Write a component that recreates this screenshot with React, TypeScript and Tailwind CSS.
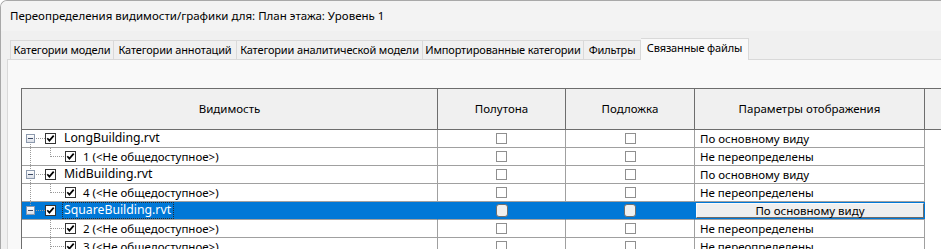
import React from "react";

const tabs = [
  { label: "Категории модели", w: "w-[104px]" },
  { label: "Категории аннотаций", w: "w-[123px]" },
  { label: "Категории аналитической модели", w: "w-[186px]" },
  { label: "Импортированные категории", w: "w-[161px]" },
  { label: "Фильтры", w: "w-[57px]" },
];

type Row =
  | { kind: "parent"; name: string; first: boolean; hasNext: boolean; selected?: boolean; param: string }
  | { kind: "child"; name: string; parentHasNext: boolean; hasNext: boolean; param: string };

const rows: Row[] = [
  { kind: "parent", name: "LongBuilding.rvt", first: true, hasNext: true, param: "По основному виду" },
  { kind: "child", name: "1 (<Не общедоступное>)", parentHasNext: true, hasNext: false, param: "Не переопределены" },
  { kind: "parent", name: "MidBuilding.rvt", first: false, hasNext: true, param: "По основному виду" },
  { kind: "child", name: "4 (<Не общедоступное>)", parentHasNext: true, hasNext: false, param: "Не переопределены" },
  { kind: "parent", name: "SquareBuilding.rvt", first: false, hasNext: false, selected: true, param: "По основному виду" },
  { kind: "child", name: "2 (<Не общедоступное>)", parentHasNext: false, hasNext: true, param: "Не переопределены" },
  { kind: "child", name: "3 (<Не общедоступное>)", parentHasNext: false, hasNext: true, param: "Не переопределены" },
];

const dot = { stroke: "#9a9a9a", strokeDasharray: "1 1", shapeRendering: "crispEdges" as const };

function TreeCheck() {
  return (
    <svg width="11" height="11" viewBox="0 0 11 11" className="shrink-0">
      <rect x="0.5" y="0.5" width="10" height="10" fill="#fff" stroke="#333" shapeRendering="crispEdges" />
      <path d="M2.3 5.2 L4.4 7.6 L8.7 2.6" fill="none" stroke="#000" strokeWidth="1.7" />
    </svg>
  );
}

function ParentGutter({ first, hasNext }: { first: boolean; hasNext: boolean }) {
  return (
    <svg width="23" height="17" viewBox="0 0 23 17" className="shrink-0">
      {!first && <line x1="8.5" y1="0" x2="8.5" y2="4" {...dot} />}
      {hasNext && <line x1="8.5" y1="14" x2="8.5" y2="17" {...dot} />}
      <line x1="14" y1="8.5" x2="23" y2="8.5" {...dot} />
      <defs>
        <linearGradient id="exp" x1="0" y1="0" x2="0" y2="1">
          <stop offset="0" stopColor="#ffffff" />
          <stop offset="1" stopColor="#d8dde6" />
        </linearGradient>
      </defs>
      <rect x="4.5" y="4.5" width="8" height="8" fill="url(#exp)" stroke="#8c99ad" shapeRendering="crispEdges" />
      <line x1="6" y1="8.5" x2="11" y2="8.5" stroke="#3c4a66" shapeRendering="crispEdges" />
    </svg>
  );
}

function ChildGutter({ parentHasNext, hasNext }: { parentHasNext: boolean; hasNext: boolean }) {
  return (
    <svg width="43" height="17" viewBox="0 0 43 17" className="shrink-0">
      {parentHasNext && <line x1="8.5" y1="0" x2="8.5" y2="17" {...dot} />}
      <line x1="28.5" y1="0" x2="28.5" y2={hasNext ? 17 : 9} {...dot} />
      <line x1="29" y1="8.5" x2="42" y2="8.5" {...dot} />
    </svg>
  );
}

function EmptyBox({ selected }: { selected?: boolean }) {
  return selected ? (
    <div className="h-[13px] w-[12px] rounded-[3px] border border-[#6f6f6f] bg-[#f0f0f0]" />
  ) : (
    <div className="h-[11px] w-[11px] border border-[#8f8f8f] bg-white" />
  );
}

export default function App() {
  return (
    <div className="flex h-[249px] w-[941px] flex-col overflow-hidden whitespace-nowrap rounded-tl-[7px] border-l border-t border-[#a8a8a8] bg-[#f0f0f0] font-['Noto_Sans',sans-serif] text-[11.5px] text-black">
      <div className="flex h-[30px] shrink-0 items-center bg-[#f3f3f3] pl-[9px]">
        Переопределения видимости/графики для: План этажа: Уровень 1
      </div>

      <div className="flex flex-1 flex-col pt-[7px]">
        <div className="relative z-10 flex h-[21px] shrink-0 items-end pl-[9px] text-[11px] tracking-[-0.15px]">
          {tabs.map((t) => (
            <div
              key={t.label}
              className={`${t.w} flex h-[19px] shrink-0 items-center justify-center border-r border-t border-[#d9d9d9] bg-[#f0f0f0] first:border-l`}
            >
              {t.label}
            </div>
          ))}
          <div className="-mb-px flex h-[22px] w-[108px] shrink-0 items-center justify-center border-r border-t border-[#d9d9d9] bg-[#f9f9f9] pb-[2px]">
            Связанные файлы
          </div>
        </div>

        <div className="ml-[6px] flex-1 border-l border-t border-[#d9d9d9] bg-[#f9f9f9] pl-[13px] pt-[28px]">
          <div className="border-l border-t border-[#6d6d6d] bg-white">
            <div className="flex h-[41px] border-b border-[#6d6d6d] bg-[#f0f0f0]">
              <div className="flex w-[416px] shrink-0 items-center justify-center border-r border-[#6d6d6d]">Видимость</div>
              <div className="flex w-[128px] shrink-0 items-center justify-center border-r border-[#6d6d6d]">Полутона</div>
              <div className="flex w-[129px] shrink-0 items-center justify-center border-r border-[#6d6d6d]">Подложка</div>
              <div className="flex w-[230px] shrink-0 items-center justify-center border-r border-[#6d6d6d]">Параметры отображения</div>
              <div className="flex-1" />
            </div>

            {rows.map((r) => {
              const sel = r.kind === "parent" && r.selected;
              const cell = sel
                ? "border-b border-r border-b-[#a0a0a0] border-r-[#0078d7] bg-[#0078d7]"
                : "border-b border-r border-[#a0a0a0]";
              return (
                <div key={r.name} className="flex h-[18px]">
                  <div className={`flex w-[416px] shrink-0 items-center ${cell}`}>
                    {r.kind === "parent" ? (
                      <>
                        <ParentGutter first={r.first} hasNext={r.hasNext} />
                        <TreeCheck />
                        {sel ? (
                          <span className="ml-[6px] flex h-[17px] items-center border border-dotted border-[#2a2a2a] pl-[1px] pr-[2px] text-[12.25px] text-white">
                            {r.name}
                          </span>
                        ) : (
                          <span className="ml-[8px] text-[12.25px]">{r.name}</span>
                        )}
                      </>
                    ) : (
                      <>
                        <ChildGutter parentHasNext={r.parentHasNext} hasNext={r.hasNext} />
                        <TreeCheck />
                        <span className="ml-[7px]">{r.name}</span>
                      </>
                    )}
                  </div>
                  <div className={`flex w-[128px] shrink-0 items-center justify-center ${cell}`}>
                    <EmptyBox selected={sel} />
                  </div>
                  <div className={`flex w-[129px] shrink-0 items-center justify-center ${cell}`}>
                    <EmptyBox selected={sel} />
                  </div>
                  {sel ? (
                    <div className="flex w-[230px] shrink-0 border-b border-b-[#a0a0a0] bg-[#0078d7] p-[1px]">
                      <div className="flex flex-1 items-center justify-center border border-b-[#6a6a6a] border-l-[#fafafa] border-r-[#6a6a6a] border-t-[#fafafa] bg-[#efefef]">
                        {r.param}
                      </div>
                    </div>
                  ) : (
                    <div className={`flex w-[230px] shrink-0 items-center pl-[5px] ${cell}`}>{r.param}</div>
                  )}
                  <div className="flex-1" />
                </div>
              );
            })}
          </div>
        </div>
      </div>
    </div>
  );
}
